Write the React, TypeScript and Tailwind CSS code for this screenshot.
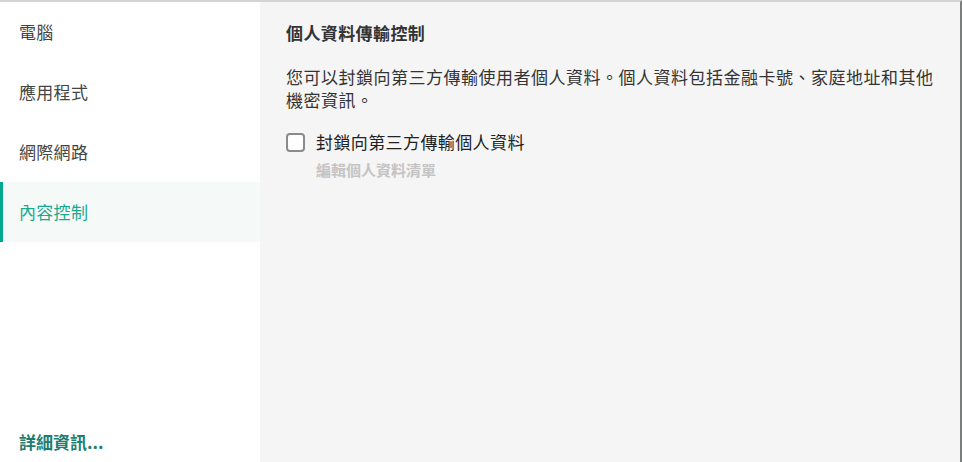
import React from 'react'

const navItems = ['電腦', '應用程式', '網際網路', '內容控制']

function Sidebar() {
  const active = 3
  return (
    <aside className="flex w-[260px] shrink-0 flex-col bg-white">
      <nav className="flex flex-col">
        {navItems.map((label, i) => (
          <div
            key={label}
            className={
              i === active
                ? 'flex h-[60px] items-center border-l-[3px] border-[#00a88e] bg-[#f5f9f8] pl-[16px] text-[17px] tracking-[0.3px] text-[#1aa88f]'
                : 'flex h-[60px] items-center pl-[19px] text-[17px] tracking-[0.3px] text-[#444444]'
            }
          >
            {label}
          </div>
        ))}
      </nav>
      <div className="mt-auto pb-[8px] pl-[19px] text-[17px] font-bold leading-[24px] text-[#1d7d70]">詳細資訊...</div>
    </aside>
  )
}

function ContentPanel() {
  return (
    <section className="flex-1 bg-[#f5f5f5] pl-[26px] pr-[24px] pt-[19px]">
      <h2 className="text-[17px] font-bold leading-[24px] tracking-[0.4px] text-[#333333]">個人資料傳輸控制</h2>
      <p className="mt-[20px] text-[17px] leading-[23px] tracking-[0.5px] text-[#333333]">
        您可以封鎖向第三方傳輸使用者個人資料。個人資料包括金融卡號、家庭地址和其他
        <br />
        機密資訊。
      </p>
      <label className="mt-[19px] flex items-center gap-[11px] text-[17px] leading-[24px] tracking-[0.4px] text-[#222222]">
        <span className="h-[19px] w-[19px] rounded-[4px] border-2 border-[#8a8a8a] bg-white" />
        封鎖向第三方傳輸個人資料
      </label>
      <div className="mt-[6px] pl-[30px] text-[15px] font-bold leading-[20px] text-[#c4c4c4]">編輯個人資料清單</div>
    </section>
  )
}

export default function App() {
  return (
    <div
      className="flex h-[462px] w-[962px] border-t-2 border-r-2 border-t-[#d4d4d4] border-r-[#7a7f7d]"
      style={{ fontFamily: '"Noto Sans CJK TC", "Noto Sans", sans-serif' }}
    >
      <Sidebar />
      <ContentPanel />
    </div>
  )
}
